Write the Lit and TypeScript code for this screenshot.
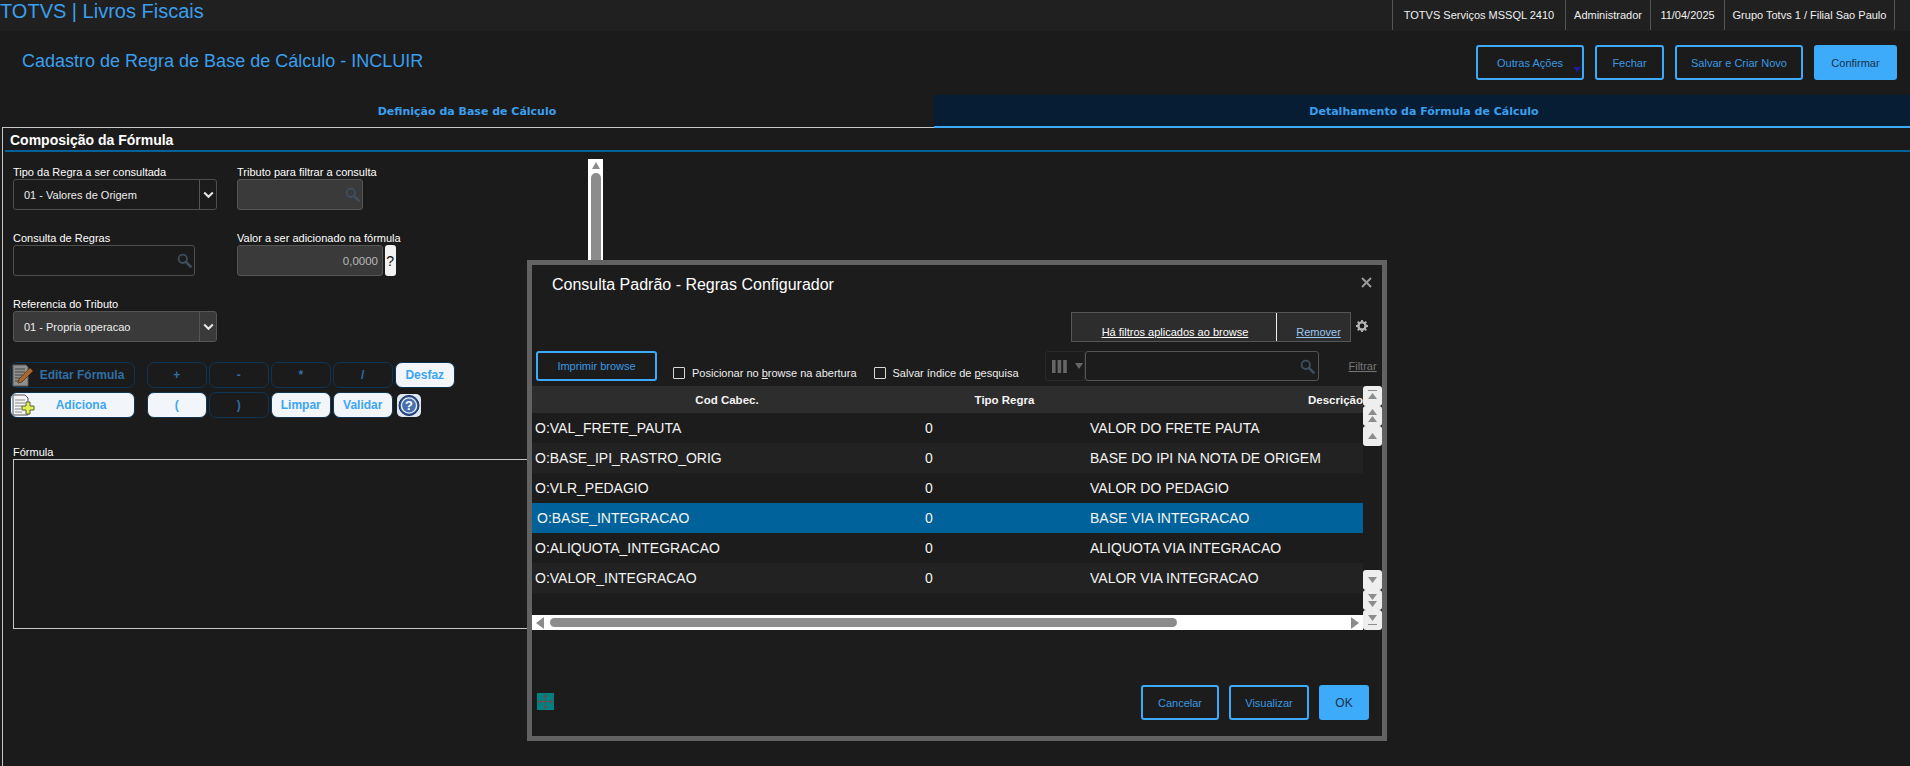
import { LitElement, html, css, svg } from "lit";
import { customElement } from "lit/decorators.js";

const rows = [
  ["O:VAL_FRETE_PAUTA", "0", "VALOR DO FRETE PAUTA"],
  ["O:BASE_IPI_RASTRO_ORIG", "0", "BASE DO IPI NA NOTA DE ORIGEM"],
  ["O:VLR_PEDAGIO", "0", "VALOR DO PEDAGIO"],
  ["O:BASE_INTEGRACAO", "0", "BASE VIA INTEGRACAO"],
  ["O:ALIQUOTA_INTEGRACAO", "0", "ALIQUOTA VIA INTEGRACAO"],
  ["O:VALOR_INTEGRACAO", "0", "VALOR VIA INTEGRACAO"],
];

const searchIcon = html`<svg class="mag" width="15" height="15" viewBox="0 0 15 15"><circle cx="5.8" cy="5.8" r="4.2" fill="none" stroke="currentColor" stroke-width="1.8"/><path d="M9 9l4.6 4.6" stroke="currentColor" stroke-width="2.6" stroke-linecap="round"/></svg>`;
const chevron = html`<svg width="11" height="8" viewBox="0 0 11 8"><path d="M1.2 1.5l4.3 4.3 4.3-4.3" fill="none" stroke="#e8e8e8" stroke-width="2"/></svg>`;
const tri = (d: string) => svg`<path d="${d}" fill="#8c8c8c"/>`;

@customElement("app-root")
export class AppRoot extends LitElement {
  static styles = css`
    :host { display: block; position: relative; width: 100%; height: 766px; overflow: hidden; background: #1b1b1b; font-family: "Liberation Sans", Arial, sans-serif; color: #fff; font-size: 11px; }
    * { box-sizing: border-box; }
    .top { display: flex; justify-content: space-between; height: 31px; background: #202020; }
    .brand { font-size: 20px; line-height: 22px; color: #3a9fec; }
    .info { display: flex; margin-right: 15px; height: 30px; border-right: 1px solid #555; border-radius: 0 0 2px 0; }
    .info span { border-left: 1px solid #555; line-height: 30px; text-align: center; font-size: 11px; color: #f0f0f0; }
    .head { display: flex; justify-content: space-between; height: 64px; padding: 14px 13px 0 22px; }
    .head h1 { margin: 0; font-weight: 400; font-size: 18px; line-height: 32px; color: #3a9fec; height: 32px; }
    .actions { display: flex; gap: 11px; }
    .btn { display: flex; align-items: center; justify-content: center; height: 35px; border: 2px solid #3daafa; border-radius: 3px; color: #3a98e0; font-size: 11px; position: relative; }
    .btn.fill { background: #3daafa; color: #17324a; }
    .more::after { content: ""; position: absolute; right: 1px; bottom: 6px; border: 4px solid transparent; border-top: 5px solid #1b1ba0; border-bottom: 0; }
    .tabs { display: grid; grid-template-columns: 934px 1fr; height: 33px; }
    .tab { font-family: "DejaVu Sans", sans-serif; font-weight: 700; font-size: 11px; color: #3a9fec; display: flex; align-items: center; justify-content: center; padding-top: 2px; padding-bottom: 2px; }
    .tab.on { background: #061d33; border-bottom: 2px solid #3daafa; padding-bottom: 0; padding-left: 4px; }
    .panel { margin: -1px 0 0 2px; border-left: 1px solid #c8c8c8; border-top: 1px solid #c8c8c8; height: 700px; }
    .ptitle { margin-left: 2px; height: 24px; border-bottom: 2px solid #00629a; padding-left: 5px; font-size: 14px; font-weight: 700; line-height: 25px; }
    .work { display: flex; padding-top: 7px; }
    .left { width: 585px; padding: 6px 0 0 10px; }
    .grid { display: grid; grid-template-columns: 224px 1fr; grid-auto-rows: 66px; }
    .f label { display: block; height: 14px; line-height: 14px; }
    .ctl { display: flex; align-items: center; height: 31px; border: 1px solid #4e4e4e; border-radius: 3px; }
    .ctl.dis { background: #3a3a3a; border-color: #555; }
    .val { flex: 1; padding-left: 10px; color: #ededed; }
    .drop { width: 17px; height: 100%; border-left: 1px solid #555; display: flex; align-items: center; justify-content: center; }
    .mag { color: #3e4e5e; margin-left: auto; margin-right: 2px; display: block; }
    .num { flex: 1; text-align: right; padding-right: 4px; color: #b8b8b8; font-size: 11.5px; }
    .help { width: 10.5px; height: 31px; background: #f2f2f2; color: #111; border-radius: 3px; font-size: 14px; display: flex; align-items: center; justify-content: center; margin-left: 2px; }
    .vrow { display: flex; }
    .ops { margin: -1px 0 0 -3.5px; display: flex; flex-direction: column; gap: 4px; }
    .oprow { display: flex; gap: 2.5px; align-items: center; }
    .b { height: 26px; width: 59.5px; border: 1px solid #0e3554; border-radius: 7px; font-size: 12px; font-weight: 700; display: flex; align-items: center; justify-content: center; color: #2f6fa5; }
    .b.w { background: #f2f6fb; color: #3da5f4; }
    .b.big { width: 125px; margin-right: 10px; justify-content: flex-start; padding-left: 0; }
    .b.big span { flex: 1; text-align: center; }
    .b.big.e span { padding-right: 4px; }
    .b.big.a span { padding-right: 6px; }
    .b.big svg { flex: none; }
    .hp { width: 24px; height: 23px; margin-left: 2px; display: block; }
    .flabel { margin-top: 27px; height: 14px; line-height: 14px; }
    .fbox { height: 170px; width: 575px; border: 1px solid #c8c8c8; }
    .vbar { width: 15px; height: 500px; background: #fff; padding: 3px 2px; display: flex; flex-direction: column; align-items: center; gap: 4px; }
    .vthumb { flex: 1; width: 10px; background: #8c8c8c; border-radius: 5px 5px 0 0; }
    .modal { position: absolute; left: 527px; top: 260px; width: 860px; height: 481px; background: #1c1c1c; border: 5px solid #626262; display: flex; flex-direction: column; }
    .mhead { display: flex; justify-content: space-between; height: 47px; padding: 10px 10px 0 20px; }
    .mhead h2 { margin: 0; font-weight: 400; font-size: 16px; line-height: 20px; }
    .x { width: 11px; height: 11px; margin-top: 2px; display: block; }
    .frow { display: flex; justify-content: flex-end; height: 30px; align-items: center; padding-right: 14px; }
    .fbar { display: grid; grid-template-columns: 204px 76px; width: 280px; height: 30px; background: #2d2d2d; border: 1px solid #555; }
    .fbar a { display: flex; align-items: flex-end; justify-content: center; padding: 0 0 3px 2px; text-decoration: underline; }
    .fbar a + a { border-left: 1px solid #eee; color: #9cc8f0; padding-left: 8px; }
    .gear { margin-left: 5px; display: block; margin-bottom: 3px; }
    .tools { display: flex; height: 30px; margin-top: 9px; padding-left: 4px; }
    .print { width: 121px; height: 30px; }
    .chk { display: flex; align-self: flex-end; align-items: center; height: 16px; gap: 7px; color: #eee; }
    .box { width: 12px; height: 12px; border: 1.5px solid #d8d8d8; border-radius: 1px; display: block; }
    .c1 { margin-left: 16px; }
    .c2 { margin-left: 17px; }
    .cols { margin-left: 26px; width: 40px; height: 30px; border: 1px solid #2a2a2a; border-radius: 3px 0 0 3px; display: flex; align-items: center; padding-left: 6px; gap: 8px; }
    .bars { width: 15px; height: 13px; display: block; }
    .caret { border: 4px solid transparent; border-top: 6px solid #666; border-bottom: 0; }
    .search { width: 234px; height: 30px; border: 1px solid #555; border-radius: 3px; display: flex; align-items: center; padding-right: 1px; }
    .filt { margin: 8px 0 0 30px; color: #777; text-decoration: underline; line-height: 14px; height: 14px; }
    .tablewrap { display: flex; margin-top: 5px; height: 244px; }
    .table { width: 831px; display: flex; flex-direction: column; }
    .tr { display: grid; grid-template-columns: 390px 165px 276px; height: 30px; align-items: center; font-size: 14px; white-space: nowrap; color: #f4f4f4; }
    .tr > span { padding-left: 3px; overflow: hidden; }
    .tr.alt { background: #222; }
    .tr.sel { background: #00629a; }
    .tr.sel > span:first-child { padding-left: 5px; }
    .th { height: 27px; background: #2d2d2d; font-size: 11.5px; font-weight: 700; }
    .th > span { text-align: center; padding: 0; }
    .th > span:last-child { text-align: right; }
    .hbar { margin-top: auto; height: 15px; background: #fff; display: flex; align-items: center; padding: 0 4px; }
    .hthumb { width: 627px; height: 9px; background: #8c8c8c; border-radius: 5px; margin-left: 6px; }
    .hbar .r { margin-left: auto; }
    .sb { width: 19px; display: flex; flex-direction: column; }
    .sb svg { width: 19px; height: 20px; display: block; background: #eee; border-radius: 3px; }
    .sb .sp { flex: 1; }
    .foot { flex: 1; display: flex; padding: 55px 13px 0 5px; gap: 10px; }
    .move { width: 17px; height: 17px; background: #008080; margin: 8px auto 0 0; display: block; }
    .cancel { width: 78px; }
    .vis { width: 80px; }
    .ok { width: 50px; font-size: 12px; }
  `;

  render() {
    return html`
      <div class="top">
        <div class="brand">TOTVS | Livros Fiscais</div>
        <div class="info">
          <span style="width:173px">TOTVS Serviços MSSQL 2410</span>
          <span style="width:85px">Administrador</span>
          <span style="width:74px">11/04/2025</span>
          <span style="width:170px">Grupo Totvs 1 / Filial Sao Paulo</span>
        </div>
      </div>
      <div class="head">
        <h1>Cadastro de Regra de Base de Cálculo - INCLUIR</h1>
        <div class="actions">
          <div class="btn more" style="width:108px">Outras Ações</div>
          <div class="btn" style="width:69px">Fechar</div>
          <div class="btn" style="width:128px">Salvar e Criar Novo</div>
          <div class="btn fill" style="width:83px">Confirmar</div>
        </div>
      </div>
      <div class="tabs">
        <div class="tab">Definição da Base de Cálculo</div>
        <div class="tab on">Detalhamento da Fórmula de Cálculo</div>
      </div>
      <div class="panel">
        <div class="ptitle">Composição da Fórmula</div>
        <div class="work">
          <div class="left">
            <div class="grid">
              <div class="f"><label>Tipo da Regra a ser consultada</label>
                <div class="ctl" style="width:204px"><span class="val">01 - Valores de Origem</span><span class="drop">${chevron}</span></div></div>
              <div class="f"><label>Tributo para filtrar a consulta</label>
                <div class="ctl dis" style="width:126px">${searchIcon}</div></div>
              <div class="f"><label>Consulta de Regras</label>
                <div class="ctl" style="width:182px">${searchIcon}</div></div>
              <div class="f"><label>Valor a ser adicionado na fórmula</label>
                <div class="vrow"><div class="ctl dis" style="width:146px"><span class="num">0,0000</span></div><div class="help">?</div></div></div>
              <div class="f"><label>Referencia do Tributo</label>
                <div class="ctl dis" style="width:204px"><span class="val">01 - Propria operacao</span><span class="drop">${chevron}</span></div></div>
            </div>
            <div class="ops">
              <div class="oprow">
                <div class="b big e"><svg width="24" height="24" viewBox="0 0 24 24"><path d="M2 2h13l2 2v19H2z" fill="#8f8f8f" stroke="#5a5a5a"/><path d="M4 6h10M4 9h10M4 12h8M4 15h6M4 18h5" stroke="#444" stroke-width="1"/><path d="M7 20l1-4L19 5l3 3L11 19z" fill="#a8682c" stroke="#5b3315" stroke-width=".8"/></svg><span>Editar Fórmula</span></div>
                <div class="b">+</div><div class="b">-</div><div class="b">*</div><div class="b">/</div><div class="b w">Desfaz</div>
              </div>
              <div class="oprow">
                <div class="b big w a"><svg width="24" height="24" viewBox="0 0 24 24"><path d="M2 2h12l3 3v17H2z" fill="#f4f4f4" stroke="#555"/><path d="M4 7h10M4 10h10M4 13h7M4 16h6M4 19h7" stroke="#888"/><path d="M15 9h4v4h4v4h-4v4h-4v-4h-4v-4h4z" fill="#e2ef52" stroke="#55603a"/></svg><span>Adiciona</span></div>
                <div class="b w">(</div><div class="b">)</div><div class="b w">Limpar</div><div class="b w">Validar</div>
                <svg class="hp" viewBox="0 0 24 23"><rect width="24" height="23" rx="5" fill="#dfe7f2"/><circle cx="12" cy="11.5" r="10" fill="#2c4f8e" stroke="#16305f"/><circle cx="12" cy="11.5" r="7.6" fill="#486fae" stroke="#e8eef7" stroke-width="1.4"/><text x="12" y="16" text-anchor="middle" font-size="13" font-weight="700" font-family="Liberation Sans" fill="#fff">?</text></svg>
              </div>
            </div>
            <div class="flabel">Fórmula</div>
            <div class="fbox"></div>
          </div>
          <div class="vbar">
            <svg width="10" height="7" viewBox="0 0 10 7"><path d="M5 0l4 7H1z" fill="#8c8c8c"/></svg>
            <div class="vthumb"></div>
          </div>
        </div>
      </div>

      <div class="modal">
        <div class="mhead">
          <h2>Consulta Padrão - Regras Configurador</h2>
          <svg class="x" viewBox="0 0 11 11"><path d="M1 1l9 9M10 1l-9 9" stroke="#999" stroke-width="2"/></svg>
        </div>
        <div class="frow">
          <div class="fbar"><a>Há filtros aplicados ao browse</a><a>Remover</a></div>
          <svg class="gear" width="12" height="12" viewBox="0 0 12 12"><circle cx="6" cy="6" r="3.6" fill="none" stroke="#b5b5b5" stroke-width="2.4"/><path d="M6 0v2M6 10v2M0 6h2M10 6h2M1.7 1.7l1.4 1.4M8.9 8.9l1.4 1.4M1.7 10.3l1.4-1.4M8.9 3.1l1.4-1.4" stroke="#b5b5b5" stroke-width="1.8"/></svg>
        </div>
        <div class="tools">
          <div class="btn print">Imprimir browse</div>
          <div class="chk c1"><i class="box"></i><span>Posicionar no <u>b</u>rowse na abertura</span></div>
          <div class="chk c2"><i class="box"></i><span>Salvar índice de <u>p</u>esquisa</span></div>
          <div class="cols"><svg class="bars" viewBox="0 0 15 13"><path d="M0 0h3.6v13H0zM5.6 0h3.6v13H5.6zM11.2 0h3.6v13h-3.6z" fill="#666"/></svg><i class="caret"></i></div>
          <div class="search">${searchIcon}</div>
          <div class="filt">Filtrar</div>
        </div>
        <div class="tablewrap">
          <div class="table">
            <div class="tr th"><span>Cod Cabec.</span><span>Tipo Regra</span><span>Descrição</span></div>
            ${rows.map((r, i) => html`<div class="tr ${i === 3 ? "sel" : i % 2 ? "alt" : ""}"><span>${r[0]}</span><span>${r[1]}</span><span>${r[2]}</span></div>`)}
            <div class="hbar">
              <svg width="8" height="12" viewBox="0 0 8 12"><path d="M8 0v12L0 6z" fill="#8c8c8c"/></svg>
              <div class="hthumb"></div>
              <svg class="r" width="8" height="12" viewBox="0 0 8 12"><path d="M0 0v12l8-6z" fill="#8c8c8c"/></svg>
            </div>
          </div>
          <div class="sb">
            <svg viewBox="0 0 19 20"><path d="M5 4h9v1H5z" fill="#8c8c8c"/>${tri("M9.5 7l4.5 6H5z")}</svg>
            <svg viewBox="0 0 19 20">${tri("M9.5 3l4.5 6H5z")}${tri("M9.5 10l4.5 6H5z")}</svg>
            <svg viewBox="0 0 19 20">${tri("M9.5 7l4.5 6H5z")}</svg>
            <div class="sp"></div>
            <svg viewBox="0 0 19 20">${tri("M5 7h9l-4.5 6z")}</svg>
            <svg viewBox="0 0 19 20">${tri("M5 4h9l-4.5 6z")}${tri("M5 11h9l-4.5 6z")}</svg>
            <svg viewBox="0 0 19 20">${tri("M5 5h9l-4.5 6z")}<path d="M5 14h9v1H5z" fill="#8c8c8c"/></svg>
          </div>
        </div>
        <div class="foot">
          <svg class="move" viewBox="0 0 17 17"><path d="M8.5 2v13M2 8.5h13" stroke="#6b4c4c" stroke-width="1"/><path d="M8.5 1l2.2 3h-4.4zM8.5 16l2.2-3h-4.4zM1 8.5l3-2.2v4.4zM16 8.5l-3-2.2v4.4z" fill="#6b4c4c"/></svg>
          <div class="btn cancel">Cancelar</div>
          <div class="btn vis">Visualizar</div>
          <div class="btn fill ok">OK</div>
        </div>
      </div>
    `;
  }
}
